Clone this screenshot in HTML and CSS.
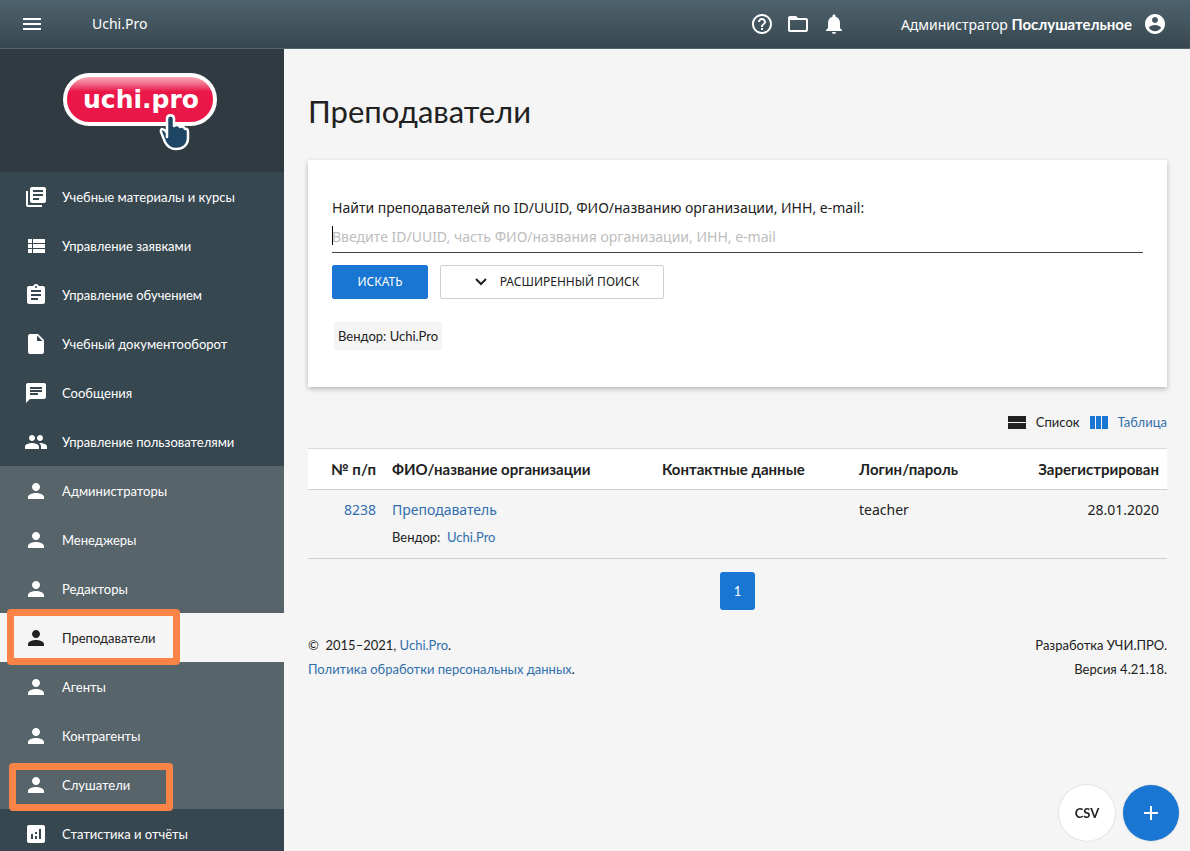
FILE: index.html
```html
<!DOCTYPE html>
<html lang="ru">
<head>
<meta charset="utf-8">
<meta name="viewport" content="width=device-width, initial-scale=1">
<title>Преподаватели – Uchi.Pro</title>
<link rel="stylesheet" href="styles.css">
</head>
<body>
<svg class="sprite" aria-hidden="true">
  <symbol id="person" viewBox="0 0 24 24"><path d="M12 12c2.210 0 4-1.790 4-4s-1.790-4-4-4-4 1.790-4 4 1.790 4 4 4zm0 2c-2.670 0-8 1.340-8 4v2h16v-2c0-2.660-5.330-4-8-4z"/></symbol>
</svg>
<header class="topbar">
  <button class="icon-btn" type="button" aria-label="Меню"><svg class="icon" viewBox="0 0 24 24"><path d="M3 18h18v-2H3v2zm0-5h18v-2H3v2zm0-7v2h18V6H3z"/></svg></button>
  <a class="brand" href="#">Uchi.Pro</a>
  <div class="tools">
    <button class="icon-btn" type="button" aria-label="Справка"><svg class="icon" viewBox="0 0 24 24"><path d="M11 18h2v-2h-2v2zm1-16C6.480 2 2 6.480 2 12s4.480 10 10 10 10-4.480 10-10S17.520 2 12 2zm0 18c-4.410 0-8-3.590-8-8s3.590-8 8-8 8 3.590 8 8-3.590 8-8 8zm0-14c-2.210 0-4 1.790-4 4h2c0-1.100.9-2 2-2s2 .9 2 2c0 2-3 1.750-3 5h2c0-2.250 3-2.500 3-5 0-2.210-1.790-4-4-4z"/></svg></button>
    <button class="icon-btn" type="button" aria-label="Файлы"><svg class="icon" viewBox="0 0 24 24"><path d="M20 6h-8l-2-2H4c-1.100 0-2 .9-2 2v12c0 1.100.9 2 2 2h16c1.100 0 2-.9 2-2V8c0-1.100-.9-2-2-2zm0 12H4V8h16v10z"/></svg></button>
    <button class="icon-btn" type="button" aria-label="Уведомления"><svg class="icon" viewBox="0 0 24 24"><path d="M12 22c1.100 0 2-.9 2-2h-4c0 1.100.9 2 2 2zm6-6v-5c0-3.070-1.630-5.640-4.500-6.320V4c0-.83-.67-1.500-1.500-1.500s-1.500.67-1.500 1.500v.68C7.640 5.360 6 7.920 6 11v5l-2 2v1h16v-1l-2-2z"/></svg></button>
  </div>
  <a class="account" href="#"><span>Администратор <b>Послушательное</b></span><svg class="icon" viewBox="0 0 24 24"><path d="M12 2C6.480 2 2 6.480 2 12s4.480 10 10 10 10-4.480 10-10S17.520 2 12 2zm0 3c1.660 0 3 1.340 3 3s-1.340 3-3 3-3-1.340-3-3 1.340-3 3-3zm0 14.200c-2.500 0-4.710-1.280-6-3.220.03-1.990 4-3.080 6-3.080 1.990 0 5.970 1.090 6 3.080-1.290 1.940-3.500 3.220-6 3.220z"/></svg></a>
</header>
<div class="layout">
  <aside class="sidebar">
    <a class="logo" href="#">
      <svg width="154" height="78" viewBox="0 0 154 78" role="img" aria-label="uchi.pro">
        <defs><linearGradient id="gloss" x1="0" y1="0" x2="0" y2="1"><stop offset="0" stop-color="#f9b4c1"/><stop offset=".15" stop-color="#f37d95"/><stop offset=".34" stop-color="#ea1748"/><stop offset="1" stop-color="#ea1748"/></linearGradient></defs>
        <rect x="2" y="2" width="150" height="49" rx="24.500" fill="url(#gloss)" stroke="#fff" stroke-width="4"/>
        <text class="logo-text" x="78" y="35" text-anchor="middle">uchi.pro</text>
        <path d="M104 64V46c0-5 7-5 7 0v7c2-2 5-1 6 1 2-1 4 0 5 2 2-1 3 1 3 3v6c0 7-5 11-12 11-6 0-9-3-11-7l-4-10c-1-4 3-4 6 1z" fill="#1c4663" stroke="#fff" stroke-width="2.500" stroke-linejoin="round"/>
      </svg>
    </a>
    <nav>
      <ul class="menu">
        <li><a class="item" href="#"><svg class="icon" viewBox="0 0 24 24"><path d="M4 6H2v14c0 1.100.9 2 2 2h14v-2H4V6zm16-4H8c-1.100 0-2 .9-2 2v12c0 1.100.9 2 2 2h12c1.100 0 2-.9 2-2V4c0-1.100-.9-2-2-2zm-1 9H9V9h10v2zm-4 4H9v-2h6v2zm4-8H9V5h10v2z"/></svg>Учебные материалы и курсы</a></li>
        <li><a class="item" href="#"><svg class="icon" viewBox="0 0 24 24"><path d="M4 14h4v-4H4v4zm0 5h4v-4H4v4zM4 9h4V5H4v4zm5 5h12v-4H9v4zm0 5h12v-4H9v4zM9 5v4h12V5H9z"/></svg>Управление заявками</a></li>
        <li><a class="item" href="#"><svg class="icon" viewBox="0 0 24 24"><path d="M19 3h-4.180C14.400 1.840 13.300 1 12 1c-1.300 0-2.400.84-2.820 2H5c-1.100 0-2 .9-2 2v14c0 1.100.9 2 2 2h14c1.100 0 2-.9 2-2V5c0-1.100-.9-2-2-2zm-7 0c.55 0 1 .45 1 1s-.45 1-1 1-1-.45-1-1 .45-1 1-1zm2 14H7v-2h7v2zm3-4H7v-2h10v2zm0-4H7V7h10v2z"/></svg>Управление обучением</a></li>
        <li><a class="item" href="#"><svg class="icon" viewBox="0 0 24 24"><path d="M6 2c-1.100 0-1.990.9-1.990 2L4 20c0 1.100.89 2 1.990 2H18c1.100 0 2-.9 2-2V8l-6-6H6zm7 7V3.500L18.500 9H13z"/></svg>Учебный документооборот</a></li>
        <li><a class="item" href="#"><svg class="icon" viewBox="0 0 24 24"><path d="M20 2H4c-1.100 0-1.990.9-1.990 2L2 22l4-4h14c1.100 0 2-.9 2-2V4c0-1.100-.9-2-2-2zM6 9h12v2H6V9zm8 5H6v-2h8v2zm4-6H6V6h12v2z"/></svg>Сообщения</a></li>
        <li><a class="item" href="#"><svg class="icon" viewBox="0 0 24 24"><path d="M16 11c1.660 0 2.990-1.340 2.990-3S17.660 5 16 5c-1.660 0-3 1.340-3 3s1.340 3 3 3zm-8 0c1.660 0 2.990-1.340 2.990-3S9.660 5 8 5C6.340 5 5 6.340 5 8s1.340 3 3 3zm0 2c-2.330 0-7 1.170-7 3.500V19h14v-2.500c0-2.330-4.670-3.500-7-3.500zm8 0c-.29 0-.62.02-.97.05 1.160.84 1.970 1.970 1.970 3.450V19h6v-2.500c0-2.330-4.670-3.500-7-3.500z"/></svg>Управление пользователями</a>
          <ul class="menu submenu">
            <li><a class="item" href="#"><svg class="icon"><use href="#person"/></svg>Администраторы</a></li>
            <li><a class="item" href="#"><svg class="icon"><use href="#person"/></svg>Менеджеры</a></li>
            <li><a class="item" href="#"><svg class="icon"><use href="#person"/></svg>Редакторы</a></li>
            <li><a class="item active" href="#" aria-current="page"><svg class="icon"><use href="#person"/></svg>Преподаватели<span class="mark mark-teachers"></span></a></li>
            <li><a class="item" href="#"><svg class="icon"><use href="#person"/></svg>Агенты</a></li>
            <li><a class="item" href="#"><svg class="icon"><use href="#person"/></svg>Контрагенты</a></li>
            <li><a class="item" href="#"><svg class="icon"><use href="#person"/></svg>Слушатели<span class="mark mark-students"></span></a></li>
          </ul>
        </li>
        <li><a class="item" href="#"><svg class="icon" viewBox="0 0 24 24"><path d="M19 3H5c-1.100 0-2 .9-2 2v14c0 1.100.9 2 2 2h14c1.100 0 2-.9 2-2V5c0-1.100-.9-2-2-2zM9 17H7v-5h2v5zm4 0h-2v-3h2v3zm0-5h-2v-2h2v2zm4 5h-2V7h2v10z"/></svg>Статистика и отчёты</a></li>
      </ul>
    </nav>
  </aside>
  <main class="content">
    <h1>Преподаватели</h1>
    <form class="card">
      <label for="q">Найти преподавателей по ID/UUID, ФИО/названию организации, ИНН, e-mail:</label>
      <div class="field"><input id="q" type="text" placeholder="Введите ID/UUID, часть ФИО/названия организации, ИНН, e-mail"></div>
      <div class="actions">
        <button class="btn primary" type="button">ИСКАТЬ</button>
        <button class="btn outline" type="button"><svg class="chevron" viewBox="0 0 12 8"><path d="M1 1l5 5 5-5"/></svg>РАСШИРЕННЫЙ ПОИСК</button>
      </div>
      <span class="chip">Вендор: Uchi.Pro</span>
    </form>
    <div class="views">
      <button class="view" type="button"><svg width="18" height="13" viewBox="0 0 18 13"><path d="M0 0h18v6H0zM0 7h18v6H0z"/></svg>Список</button>
      <a class="view" href="#"><svg width="18" height="13" viewBox="0 0 18 13"><path d="M0 0h5v13H0zM6 0h5v13H6zM12 0h6v13h-6z"/></svg>Таблица</a>
    </div>
    <table class="grid">
      <colgroup><col class="c-id"><col class="c-name"><col class="c-contact"><col class="c-login"><col class="c-date"></colgroup>
      <thead><tr><th class="num">№ п/п</th><th>ФИО/название организации</th><th>Контактные данные</th><th>Логин/пароль</th><th class="num">Зарегистрирован</th></tr></thead>
      <tbody><tr><td class="num"><a href="#">8238</a></td><td><a href="#">Преподаватель</a><div class="vendor">Вендор:&nbsp; <a href="#">Uchi.Pro</a></div></td><td></td><td>teacher</td><td class="num">28.01.2020</td></tr></tbody>
    </table>
    <nav class="pager" aria-label="Страницы"><a href="#" aria-current="page">1</a></nav>
    <footer class="footer">
      <div>©&nbsp; 2015–2021, <a href="#">Uchi.Pro</a>.<br><a href="#">Политика обработки персональных данных</a>.</div>
      <div class="num">Разработка УЧИ.ПРО.<br>Версия 4.21.18.</div>
    </footer>
  </main>
</div>
<div class="fabs">
  <button class="fab" type="button">CSV</button>
  <button class="fab add" type="button" aria-label="Добавить"><svg width="16" height="16" viewBox="0 0 16 16"><path d="M7 1h2v6h6v2H9v6H7V9H1V7h6z"/></svg></button>
</div>
</body>
</html>
```
FILE: styles.css
```css
* { box-sizing: border-box; }

body {
  --wide: "Noto Sans", "Open Sans", sans-serif;
  margin: 0;
  min-height: 100vh;
  display: flex;
  flex-direction: column;
  background: #f5f5f5;
  color: #212121;
  font: 13px/24px Lato, "Noto Sans", sans-serif;
}

a { color: #316fac; text-decoration: none; }
button, input { font: inherit; color: inherit; }
button { cursor: pointer; }
ul { list-style: none; margin: 0; padding: 0; }
svg { fill: currentColor; flex: none; }
.sprite { display: none; }
.icon { width: 24px; height: 24px; display: block; }
.num { text-align: right; }

.topbar {
  height: 49px;
  display: flex;
  align-items: center;
  padding: 0 23px 0 20px;
  background: linear-gradient(#4e626d, #37474f);
  border-bottom: 1px solid #53646c;
  color: #fff;
  font-family: var(--wide);
  font-size: 14px;
}
.topbar a { color: #fff; }
.topbar b { font-family: Lato, sans-serif; font-size: 15px; }
.icon-btn { background: none; border: 0; padding: 0; }
.brand { margin-left: 48px; }
.tools { display: flex; gap: 12px; margin-left: auto; margin-right: 55px; }
.account { display: flex; align-items: center; gap: 11px; }

.layout { flex: 1; display: flex; height: calc(100vh - 49px); }

.sidebar {
  width: 284px;
  flex: none;
  overflow: hidden;
  background: #37474f;
}
.logo {
  display: flex;
  justify-content: center;
  padding: 24px 4px 21px 0;
  background: #2f3b40;
}
.logo-text {
  font: 700 25px "DejaVu Sans", sans-serif;
  fill: #fff;
}
.item {
  position: relative;
  display: flex;
  align-items: center;
  gap: 14px;
  height: 49px;
  padding-left: 24px;
  color: #fff;
}
.submenu { background: #57646a; }
.item.active { background: #f5f5f5; color: #212121; }
.mark {
  position: absolute;
  border: 7px solid #fa8447;
  border-radius: 4px;
}
.mark-teachers { left: 7px; top: -4px; width: 173px; height: 56px; }
.mark-students { left: 9px; top: 3px; width: 164px; height: 48px; }

.content {
  flex: 1;
  min-width: 0;
  overflow: hidden;
  padding: 40px 23px 0 24px;
}
h1 {
  margin: 0 0 27px;
  font-size: 31px;
  line-height: 44px;
  font-weight: 400;
}
.card {
  display: block;
  padding: 36px 24px 37px;
  background: #fff;
  box-shadow: 0 2px 5px rgba(0, 0, 0, .26);
}
.card label { display: block; font-family: var(--wide); font-size: 14px; }
.field { position: relative; border-bottom: 1px solid #424242; }
.field::before {
  content: "";
  position: absolute;
  left: 0;
  top: 6px;
  width: 1px;
  height: 19px;
  background: #000;
}
.field input {
  display: block;
  width: 100%;
  height: 32px;
  padding: 0;
  border: 0;
  outline: 0;
  background: none;
  font-family: var(--wide);
  font-size: 14px;
}
.field input::placeholder { color: #bdbdbd; opacity: 1; }
.actions { display: flex; gap: 12px; margin: 12px 0 23px; }
.btn {
  height: 34px;
  border: 1px solid #cfcfcf;
  border-radius: 2px;
  background: #fff;
  font-family: var(--wide);
  font-size: 12px;
}
.primary { width: 96px; background: #1976d2; border-color: #1976d2; color: #fff; }
.outline {
  width: 224px;
  display: flex;
  align-items: center;
  justify-content: center;
  gap: 13px;
  padding: 0 0 0 10px;
}
.chevron { width: 12px; height: 8px; fill: none; stroke: currentColor; stroke-width: 2; }
.chip {
  display: inline-block;
  margin-left: 2px;
  padding: 2px 4px;
  background: #f5f5f5;
}

.views {
  display: flex;
  justify-content: flex-end;
  gap: 10px;
  padding: 23px 0 14px;
}
.view {
  display: flex;
  align-items: center;
  gap: 10px;
  padding: 0;
  border: 0;
  background: none;
}
a.view svg { fill: #1976d2; }

.grid {
  width: 100%;
  table-layout: fixed;
  border-collapse: collapse;
}
.c-id { width: 76px; }
.c-name { width: 270px; }
.c-contact { width: 197px; }
.c-login { width: 148px; }
.grid th, .grid td { padding: 8px; vertical-align: top; text-align: left; border-bottom: 1px solid #cfcfcf; }
.grid th { background: #fff; border-top: 1px solid #d8d8d8; font-size: 15px; }
.grid td { padding-bottom: 9px; font-family: var(--wide); font-size: 14px; }
.grid .num { text-align: right; }
.grid .vendor { padding-top: 3px; font-family: Lato, sans-serif; font-size: 13px; }

.pager { display: flex; justify-content: center; padding: 13px 0 23px; }
.pager a {
  width: 35px;
  border-radius: 3px;
  background: #1976d2;
  color: #fff;
  line-height: 38px;
  text-align: center;
}
.footer { display: flex; justify-content: space-between; }

.fabs {
  position: fixed;
  right: 11px;
  bottom: 10px;
  display: flex;
  gap: 8px;
}
.fab {
  width: 56px;
  height: 56px;
  display: flex;
  align-items: center;
  justify-content: center;
  border: 0;
  border-radius: 50%;
  background: #fff;
  box-shadow: 0 0 2px rgba(0, 0, 0, .2);
  font-weight: 700;
}
.add { background: #1976d2; color: #fff; }
```
